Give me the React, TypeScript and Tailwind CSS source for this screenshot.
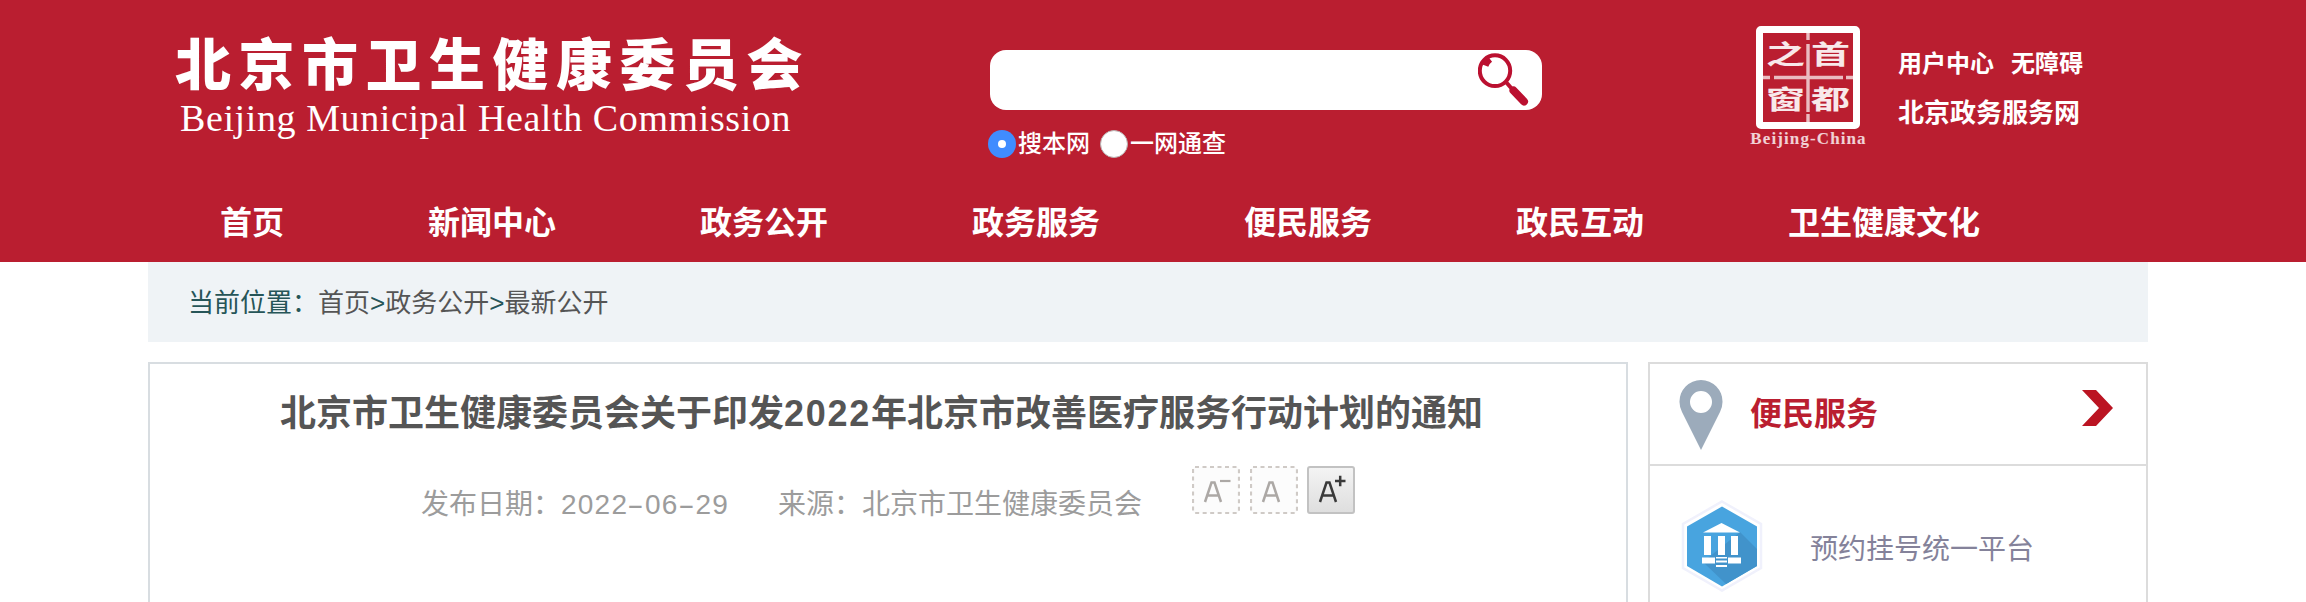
const NAV = ["首页", "新闻中心", "政务公开", "政务服务", "便民服务", "政民互动", "卫生健康文化"];

function Stamp() {
  return (
    <div className="w-[116px] h-[130px] flex flex-col items-center">
      <div className="relative w-[104px] h-[103px] shrink-0 rounded-[5px] border-[7px] border-white">
        <svg className="absolute inset-0" width="90" height="89" viewBox="0 0 90 89" stroke="#fff" strokeOpacity="0.7" strokeWidth="3.4">
          <path d="M0 44.500h7M11 44.500h69M83 44.500h7M45 0v7M45 11v68M45 81v8" />
        </svg>
        <div className="grid grid-cols-2 grid-rows-2 w-full h-full text-[39px] font-bold text-white/90">
          {["之", "首", "窗", "都"].map((c) => (
            <span key={c} className="flex items-center justify-center leading-none scale-y-[0.66]">{c}</span>
          ))}
        </div>
      </div>
      <span className="font-['Liberation_Serif'] font-bold text-[17px] leading-[20px] pl-px tracking-[1.100px] text-white/80 whitespace-nowrap">Beijing-China</span>
    </div>
  );
}

function Magnifier() {
  return (
    <svg width="54" height="58" viewBox="0 0 54 58" fill="none" stroke="#bb1030" className="mr-[10px] mt-[2px]">
      <ellipse cx="17" cy="18.700" rx="15.200" ry="15.400" strokeWidth="4" />
      <path d="M7 13.500q1.500-4 5-6.500" strokeWidth="7" />
      <path d="M28 30l6 7" strokeWidth="4" />
      <path d="M35.500 38.500L46 49.500" strokeWidth="8" strokeLinecap="round" />
    </svg>
  );
}

function FontButton({ sign, on }: { sign: string; on?: boolean }) {
  const ink = on ? "#3a3a3a" : "#aca8a5";
  return (
    <svg width="48" height="48" viewBox="0 0 48 48" fill="none">
      <defs>
        <linearGradient id="btn" x1="0" y1="0" x2="0" y2="1">
          <stop offset="0" stopColor="#f4f4f4" />
          <stop offset="1" stopColor="#dedede" />
        </linearGradient>
      </defs>
      {on ? (
        <rect x="1" y="1" width="46" height="46" rx="2" fill="url(#btn)" stroke="#c2c2c2" strokeWidth="2" />
      ) : (
        <rect x="1" y="1" width="46" height="46" rx="2" fill="#fcfcfc" stroke="#cfcac6" strokeWidth="2.200" strokeDasharray="4 3.500" />
      )}
      <path d="M13 36L19.500 16.500h3L29 36M15.500 29.500h11" stroke={ink} strokeWidth="2.500" />
      {sign === "-" && <path d="M28 15h10.500" stroke={ink} strokeWidth="2.200" />}
      {sign === "+" && <path d="M28 15h10.500M33.200 9.700v10.600" stroke={ink} strokeWidth="2.500" />}
    </svg>
  );
}

export default function App() {
  return (
    <div className="w-[2306px] h-[602px] overflow-hidden bg-white font-['Liberation_Sans','Noto_Sans_CJK_SC',sans-serif]">
      <header className="h-[262px] bg-[#ba1e30] pl-[148px] text-white">
        <div className="h-[180px] flex">
          <div className="w-[842px] pl-[27px] pt-[33px]">
            <div className="text-[56px] leading-[66px] font-black tracking-[7.500px] whitespace-nowrap">北京市卫生健康委员会</div>
            <div className="pl-[5px] font-['Liberation_Serif'] text-[38px] leading-[44px] -mt-[3px] tracking-[0.600px] whitespace-nowrap">Beijing Municipal Health Commission</div>
          </div>
          <div className="w-[760px] pt-[50px]">
            <div className="w-[552px] h-[60px] rounded-[16px] bg-white flex justify-end items-start">
              <Magnifier />
            </div>
            <div className="-ml-[2px] mt-[20px] flex items-center h-[28px] text-[24px] font-medium">
              <span className="w-7 h-7 rounded-full bg-[#408cff] flex items-center justify-center"><span className="w-2 h-2 rounded-full bg-white" /></span>
              <span className="w-[84px] pl-[2px]">搜本网</span>
              <span className="w-7 h-7 rounded-full bg-white border border-[#b9b0b0]" />
              <span className="pl-[2px]">一网通查</span>
            </div>
          </div>
          <div className="w-[148px] pt-[26px]"><Stamp /></div>
          <div className="pt-[46px] font-bold">
            <div className="flex gap-[17px] text-[24px] leading-[36px]"><span>用户中心</span><span>无障碍</span></div>
            <div className="mt-[13px] text-[26px] leading-[36px]">北京政务服务网</div>
          </div>
        </div>
        <nav className="flex pt-px">
          {NAV.map((n) => (
            <a key={n} className="px-[72px] text-[32px] leading-[84px] font-bold whitespace-nowrap">{n}</a>
          ))}
        </nav>
      </header>
      <div className="ml-[148px] w-[2000px]">
        <div className="h-[80px] pl-[40px] pt-[2px] bg-[#eff3f6] flex items-center text-[26px] text-[#265558]">
          <span>当前位置：</span><span className="text-[#555]">首页</span><span>&gt;</span><span className="text-[#555]">政务公开</span><span>&gt;</span><span className="text-[#555]">最新公开</span>
        </div>
        <div className="mt-[20px] flex justify-between">
          <main className="w-[1480px] h-[260px] border-2 border-[#d8dde1] pt-[25px]">
            <h1 className="pl-[130px] text-[36px] leading-[50px] font-bold text-[#555] whitespace-nowrap">
              北京市卫生健康委员会关于印发<span className="tracking-[1.700px]">2022</span>年北京市改善医疗服务行动计划的通知
            </h1>
            <div className="pl-[271px] pt-[27px] flex text-[28px] text-[#9c9c9c] whitespace-nowrap">
              <div className="w-[357px] pt-[19px] leading-[40px]">
                发布日期：<span className="tracking-[1.230px]">2022<span className="inline-block w-[16.800px] text-center scale-x-[1.8]">-</span>06<span className="inline-block w-[16.800px] text-center scale-x-[1.8]">-</span>29</span>
              </div>
              <div className="w-[414px] pt-[19px] leading-[40px]">来源：北京市卫生健康委员会</div>
              <div className="flex gap-[9.500px]">
                <FontButton sign="-" />
                <FontButton sign="" />
                <FontButton sign="+" on />
              </div>
            </div>
          </main>
          <aside className="w-[500px] h-[260px] border-2 border-[#dcdcdc]">
            <div className="h-[102px] border-b-2 border-[#dcdcdc] flex">
              <svg className="ml-[29px] mt-[16px]" width="44" height="70" viewBox="0 0 44 70">
                <path fill="#9cabbb" fillRule="evenodd" d="M22 0A21.500 21.500 0 0 1 43.500 22Q43.500 27 41 32L22 70 3 32Q.5 27 .5 22A21.500 21.500 0 0 1 22 0ZM22 11a11 11 0 1 0 0 22 11 11 0 0 0 0-22Z" />
              </svg>
              <span className="ml-[27px] text-[32px] leading-[100px] font-bold text-[#ba1e30] w-[332px]">便民服务</span>
              <svg className="mt-[26px]" width="31" height="36" viewBox="0 0 31 36"><path fill="#bb1422" d="M0 0H14L31 18 14 36H0L17 18Z" /></svg>
            </div>
            <div className="flex pt-[34px] pl-[31px]">
              <svg width="82" height="92" viewBox="0 0 82 92">
                <path d="M41 1.500L80 24v44L41 90.500 2 68V24Z" fill="#fff" stroke="#f0f1fc" strokeWidth="2.500" />
                <path d="M41 6.500L76 26.500v39.500L41 86.500 6 66V26.500Z" fill="#48a4df" />
                <path d="M59 32L76 49v17L45 84 22 62Z" fill="#4193cb" />
                <path d="M40.500 23L59 32.500H22ZM23 36h7v19h-7zM37 36h7v19h-7zM50 36h7v19h-7zM21 57.500h13v6H21zM47 57.500h13v6H47zM35 57h11v1.500H35zM35 60.500h11v2H35zM35 65h11v2H35z" fill="#fff" />
              </svg>
              <span className="ml-[47px] pt-[30px] text-[28px] leading-[40px] text-[#84829a]">预约挂号统一平台</span>
            </div>
          </aside>
        </div>
      </div>
    </div>
  );
}
